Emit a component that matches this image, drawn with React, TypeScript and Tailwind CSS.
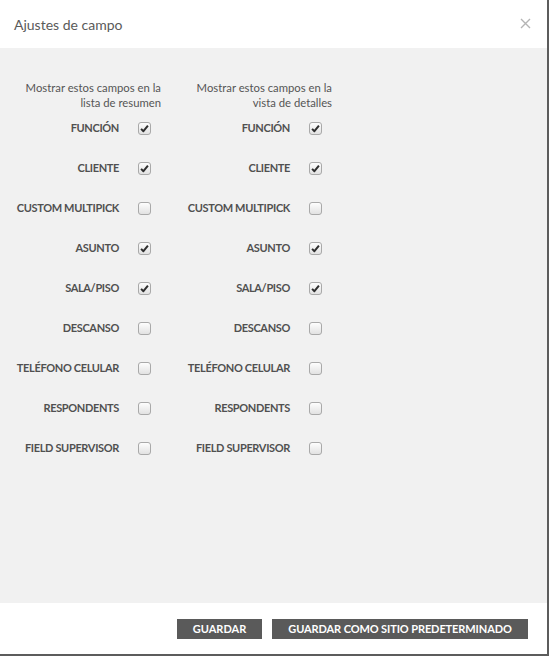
import React from "react";

const fields = [
  { name: "FUNCIÓN", summary: true, detail: true },
  { name: "CLIENTE", summary: true, detail: true },
  { name: "CUSTOM MULTIPICK", summary: false, detail: false },
  { name: "ASUNTO", summary: true, detail: true },
  { name: "SALA/PISO", summary: true, detail: true },
  { name: "DESCANSO", summary: false, detail: false },
  { name: "TELÉFONO CELULAR", summary: false, detail: false },
  { name: "RESPONDENTS", summary: false, detail: false },
  { name: "FIELD SUPERVISOR", summary: false, detail: false },
];

const Box: React.FC<{ checked: boolean }> = ({ checked }) => (
  <span className="w-[13px] h-[13px] rounded-[3px] border border-[#a9a9a9] bg-gradient-to-b from-[#fdfdfd] to-[#e2e2e2] flex items-center justify-center shrink-0">
    {checked && (
      <svg width="9" height="9" viewBox="0 0 10 10">
        <path d="M1.2 5.4 L3.8 8 L8.8 1.8" fill="none" stroke="#2e2e2e" strokeWidth="2.2" strokeLinejoin="round" />
      </svg>
    )}
  </span>
);

const Column: React.FC<{ title: [string, string]; pick: "summary" | "detail" }> = ({ title, pick }) => (
  <div className="w-[161px] flex flex-col">
    <div className="text-right text-[11.3px] leading-[15px] text-[#555]">
      <div>{title[0]}</div>
      <div>{title[1]}</div>
    </div>
    <div className="flex flex-col -mt-[2px]">
      {fields.map((f) => (
        <div key={f.name} className="h-[40px] flex items-center">
          <span className="flex-1 text-right text-[11px] tracking-[-0.35px] font-bold text-[#505050] whitespace-nowrap">
            {f.name}
          </span>
          <span className="ml-[19px] mr-[10px]">
            <Box checked={f[pick]} />
          </span>
        </div>
      ))}
    </div>
  </div>
);

export default function App() {
  return (
    <div
      className="w-[549px] h-[656px] bg-white border-r-2 border-b-2 border-[#5c5c5c] flex flex-col"
      style={{ fontFamily: "Lato, 'Open Sans', sans-serif" }}
    >
      <header className="h-[48px] shrink-0 flex items-center justify-between pl-[14px] pr-[16px]">
        <h1 className="text-[14px] text-[#5a5a5a]">Ajustes de campo</h1>
        <svg width="11" height="11" viewBox="0 0 11 11" className="mb-[2px]">
          <path d="M1 1 L10 10 M10 1 L1 10" stroke="#b4b4b4" strokeWidth="1.4" />
        </svg>
      </header>
      <main className="flex-1 bg-[#f1f1f1] pt-[32px]">
        <div className="flex gap-[10px]">
          <Column title={["Mostrar estos campos en la", "lista de resumen"]} pick="summary" />
          <Column title={["Mostrar estos campos en la", "vista de detalles"]} pick="detail" />
        </div>
      </main>
      <footer className="h-[51px] shrink-0 flex justify-end items-start gap-[10px] pt-[16px] pr-[19px]">
        <button className="h-[20px] w-[85px] bg-[#5a5a5a] text-white text-[11px] font-bold">GUARDAR</button>
        <button className="h-[20px] w-[256px] bg-[#5a5a5a] text-white text-[11px] font-bold tracking-[-0.1px]">
          GUARDAR COMO SITIO PREDETERMINADO
        </button>
      </footer>
    </div>
  );
}
